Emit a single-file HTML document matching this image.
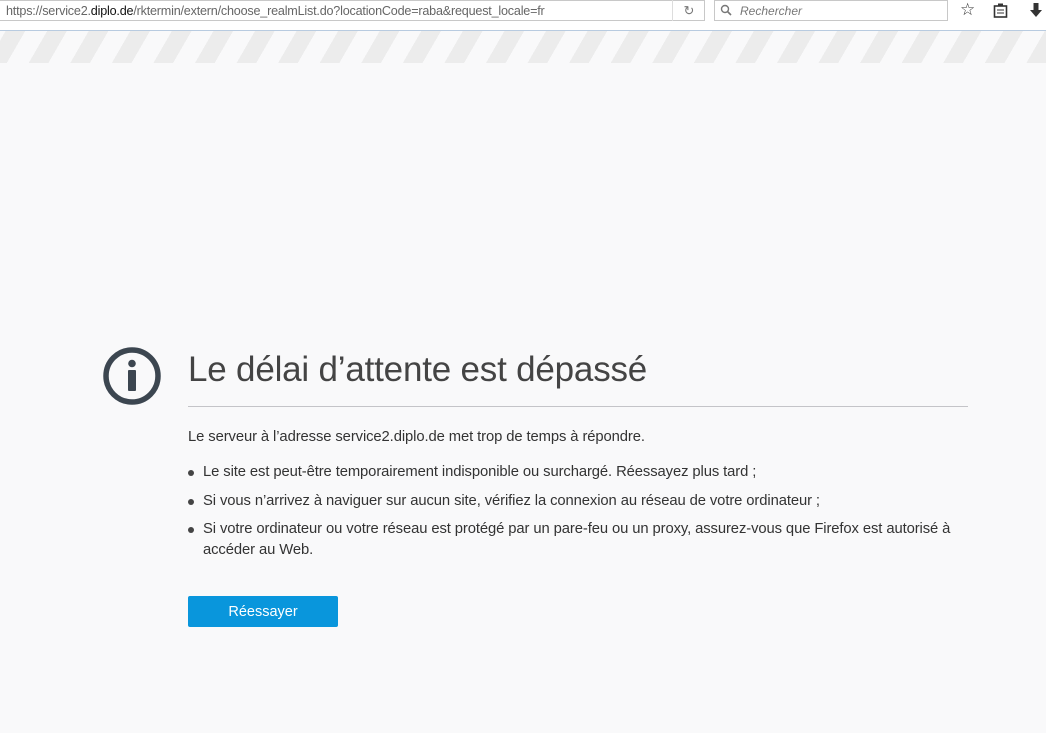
<!DOCTYPE html>
<html><head><meta charset="utf-8"><style>
body{margin:0;width:1046px;height:733px;overflow:hidden;background:#f9f9fa;font-family:"Liberation Sans",sans-serif;position:relative}
.tb{position:absolute;left:0;top:0;width:1046px;height:30px;background:#fff;border-bottom:1px solid #b8cbe0}
.url{position:absolute;left:0;top:0;height:21px;border:1px solid #c8c8c8;border-left:none;font-size:12.6px;color:#666;line-height:21px;padding-left:6px;box-sizing:border-box;width:705px;white-space:nowrap;letter-spacing:-0.2px}
.url b{color:#111;font-weight:normal}
.srch{position:absolute;left:714px;top:0;width:234px;height:21px;border:1px solid #c8c8c8;font-size:12px;color:#777;font-style:italic;line-height:21px;box-sizing:border-box;padding-left:25px}
.stripes{position:absolute;left:0;top:31px;width:1046px;height:32px;background:repeating-linear-gradient(-60deg,#ececec 0 17px,#f9f9fa 17px 36px)}
.title{position:absolute;left:188px;top:350px;font-size:35px;color:#444;letter-spacing:-0.2px;white-space:nowrap}
.hr{position:absolute;left:188px;top:406px;width:780px;height:1px;background:#c4c4c8}
.txt{position:absolute;left:188px;font-size:14.8px;color:#333;white-space:nowrap;letter-spacing:-0.1px}
.bul:before{content:"";position:absolute;left:0;top:8px;width:6px;height:6px;border-radius:50%;background:#444}
.bul span{padding-left:15px;display:block;line-height:21px}
.btn{position:absolute;left:188px;top:596px;width:150px;height:31px;background:#0996dc;border-radius:2px;color:#fff;font-size:14.5px;text-align:center;line-height:33px}
</style></head><body>
<div class="tb">
<div class="url">https://service2.<b>diplo.de</b>/rktermin/extern/choose_realmList.do?locationCode=raba&amp;request_locale=fr</div>
<div style="position:absolute;left:672px;top:0;width:32px;height:21px;border-left:1px solid #ddd;color:#777;font-size:13px;text-align:center;line-height:21px">↻</div>
<div class="srch">Rechercher</div>
<svg style="position:absolute;left:720px;top:4px" width="13" height="13"><circle cx="5" cy="5" r="3.5" fill="none" stroke="#777" stroke-width="1.4"/><line x1="7.5" y1="7.5" x2="11" y2="11" stroke="#777" stroke-width="1.6"/></svg>
<div style="position:absolute;left:960px;top:0;font-size:17px;color:#333">☆</div>
<svg style="position:absolute;left:993px;top:3px" width="15" height="15"><rect x="1.5" y="3" width="12" height="11" fill="none" stroke="#333" stroke-width="1.6"/><rect x="5" y="0.5" width="5" height="3" fill="#333"/><line x1="4" y1="7" x2="11" y2="7" stroke="#333"/><line x1="4" y1="10" x2="11" y2="10" stroke="#333"/></svg>
<svg style="position:absolute;left:1029px;top:3px" width="14" height="15"><rect x="4.5" y="0" width="5" height="7" fill="#333"/><polygon points="1,7 13,7 7,14" fill="#333"/></svg>
</div>
<div class="stripes"></div>
<svg style="position:absolute;left:102px;top:346px" width="60" height="60"><circle cx="30" cy="30" r="26" fill="none" stroke="#3c4650" stroke-width="5.5"/><circle cx="30" cy="17.5" r="3.8" fill="#3c4650"/><rect x="26" y="24" width="8" height="21" rx="1" fill="#3c4650"/></svg>
<div class="title">Le délai d’attente est dépassé</div>
<div class="hr"></div>
<div class="txt" style="top:429px">Le serveur à l’adresse service2.diplo.de met trop de temps à répondre.</div>
<div class="txt bul" style="top:462px"><span>Le site est peut-être temporairement indisponible ou surchargé. Réessayez plus tard ;</span></div>
<div class="txt bul" style="top:491px"><span>Si vous n’arrivez à naviguer sur aucun site, vérifiez la connexion au réseau de votre ordinateur ;</span></div>
<div class="txt bul" style="top:519px"><span>Si votre ordinateur ou votre réseau est protégé par un pare-feu ou un proxy, assurez-vous que Firefox est autorisé à<br>accéder au Web.</span></div>
<div class="btn">Réessayer</div>
</body></html>
